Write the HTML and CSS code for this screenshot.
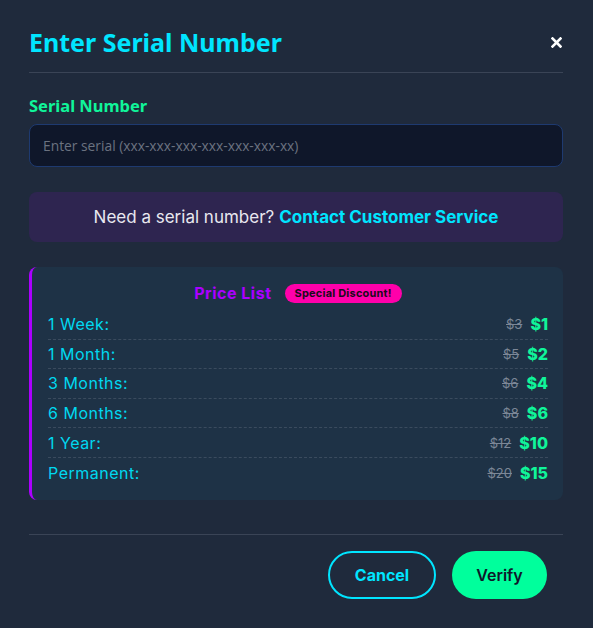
FILE: index.html
```html
<!DOCTYPE html>
<html lang="en">
<head>
<meta charset="utf-8">
<title>Enter Serial Number</title>
<link rel="stylesheet" href="styles.css">
</head>
<body>
<div class="modal">
  <header class="modal-header">
    <h1 class="modal-title">Enter Serial Number</h1>
    <button class="close-btn" aria-label="Close">
      <svg width="11" height="11" viewBox="0 0 11 11"><path d="M1.5 1.5L9.5 9.5M9.5 1.5L1.5 9.5" stroke="#ffffff" stroke-width="2.6" stroke-linecap="square"/></svg>
    </button>
  </header>
  <main class="modal-body">
    <label class="field-label" for="serial">Serial Number</label>
    <input id="serial" class="serial-input" type="text" placeholder="Enter serial (xxx-xxx-xxx-xxx-xxx-xxx-xx)">
    <div class="info-box">Need a serial number? <a class="info-link" href="#">Contact Customer Service</a></div>
    <section class="price-box">
      <div class="price-head">
        <span class="price-title">Price List</span>
        <span class="badge">Special Discount!</span>
      </div>
      <ul class="price-list">
        <li class="price-row"><span class="plan">1 Week:</span><span class="prices"><s class="old">$3</s><b class="new">$1</b></span></li>
        <li class="price-row"><span class="plan">1 Month:</span><span class="prices"><s class="old">$5</s><b class="new">$2</b></span></li>
        <li class="price-row"><span class="plan">3 Months:</span><span class="prices"><s class="old">$6</s><b class="new">$4</b></span></li>
        <li class="price-row"><span class="plan">6 Months:</span><span class="prices"><s class="old">$8</s><b class="new">$6</b></span></li>
        <li class="price-row"><span class="plan">1 Year:</span><span class="prices"><s class="old">$12</s><b class="new">$10</b></span></li>
        <li class="price-row"><span class="plan">Permanent:</span><span class="prices"><s class="old">$20</s><b class="new">$15</b></span></li>
      </ul>
    </section>
  </main>
  <footer class="modal-footer">
    <button class="btn btn-cancel">Cancel</button>
    <button class="btn btn-verify">Verify</button>
  </footer>
</div>
</body>
</html>
```

FILE: styles.css
```css
* { box-sizing: border-box; }
html, body { margin: 0; padding: 0; }
body {
  background: #1e293b;
  width: 593px;
  height: 628px;
  overflow: hidden;
  font-family: "Inter", "Open Sans", sans-serif;
}
.modal {
  width: 593px;
  height: 628px;
  background: #1f2a3c;
  padding: 0 30px 0 29px;
}
.modal-header {
  display: flex;
  align-items: center;
  justify-content: space-between;
  padding: 24px 0 12px;
  border-bottom: 1px solid #3a4456;
}
.modal-title {
  margin: 0;
  font-family: "Noto Sans", "Open Sans", sans-serif;
  font-weight: 700;
  font-size: 25px;
  line-height: 36px;
  color: #00e5ff;
}
.close-btn {
  background: none;
  border: 0;
  padding: 0;
  margin-right: 1px;
  width: 11px;
  height: 11px;
  display: flex;
}
.modal-body {
  padding-top: 23px;
  display: flex;
  flex-direction: column;
}
.field-label {
  font-family: "Noto Sans", "Open Sans", sans-serif;
  font-weight: 700;
  font-size: 16.5px;
  line-height: 20px;
  color: #10f59a;
  margin-bottom: 8px;
}
.serial-input {
  height: 43px;
  width: 100%;
  background: #0f172a;
  border: 1px solid #1e3a70;
  border-radius: 8px;
  padding: 0 13px;
  font-family: "Open Sans", "Noto Sans", sans-serif;
  font-size: 13.8px;
  color: #e5e7eb;
  outline: none;
}
.serial-input::placeholder { color: #6b7280; }
.info-box {
  margin-top: 25px;
  height: 50px;
  background: #2e2550;
  border-radius: 8px;
  display: flex;
  align-items: center;
  justify-content: center;
  gap: 5px;
  font-size: 17px;
  color: #e8e8ef;
}
.info-link {
  color: #00e5ff;
  font-weight: 700;
  text-decoration: none;
}
.price-box {
  margin-top: 25px;
  background: #1e3246;
  border-left: 3px solid #aa00ff;
  border-radius: 8px;
  padding: 16px 15px 12px 16px;
}
.price-head {
  display: flex;
  justify-content: center;
  align-items: center;
  gap: 13px;
  height: 20px;
  margin-bottom: 7px;
}
.price-title {
  color: #aa00ff;
  font-weight: 700;
  font-size: 16px;
  letter-spacing: 0.5px;
}
.badge {
  background: #ff00aa;
  color: #1a0a1a;
  font-weight: 700;
  font-size: 11px;
  letter-spacing: 0.2px;
  line-height: 19px;
  height: 19px;
  padding: 0 10px;
  border-radius: 10px;
}
.price-list {
  list-style: none;
  margin: 0;
  padding: 0;
}
.price-row {
  display: flex;
  justify-content: space-between;
  align-items: center;
  height: 29.6px;
  border-bottom: 1px dashed #3a4b5e;
}
.price-row:last-child { border-bottom: 0; }
.plan {
  color: #00d8f0;
  font-size: 16px;
  letter-spacing: 0.5px;
}
.prices {
  display: flex;
  align-items: center;
  gap: 8px;
}
.old {
  color: #7c8797;
  font-size: 13px;
}
.new {
  color: #10f59a;
  font-size: 16px;
  font-weight: 800;
}
.modal-footer {
  margin-top: 34px;
  border-top: 1px solid #3a4456;
  padding: 16px 16px 0 0;
  display: flex;
  justify-content: flex-end;
  gap: 16px;
}
.btn {
  height: 48px;
  border-radius: 24px;
  font-family: "Inter", "Open Sans", sans-serif;
  font-size: 16px;
  font-weight: 700;
  cursor: pointer;
}
.btn-cancel {
  width: 108px;
  background: transparent;
  border: 2px solid #00e5ff;
  color: #00e5ff;
}
.btn-verify {
  width: 95px;
  background: #00ff9c;
  border: 0;
  color: #0f172a;
  font-weight: 600;
}
```
